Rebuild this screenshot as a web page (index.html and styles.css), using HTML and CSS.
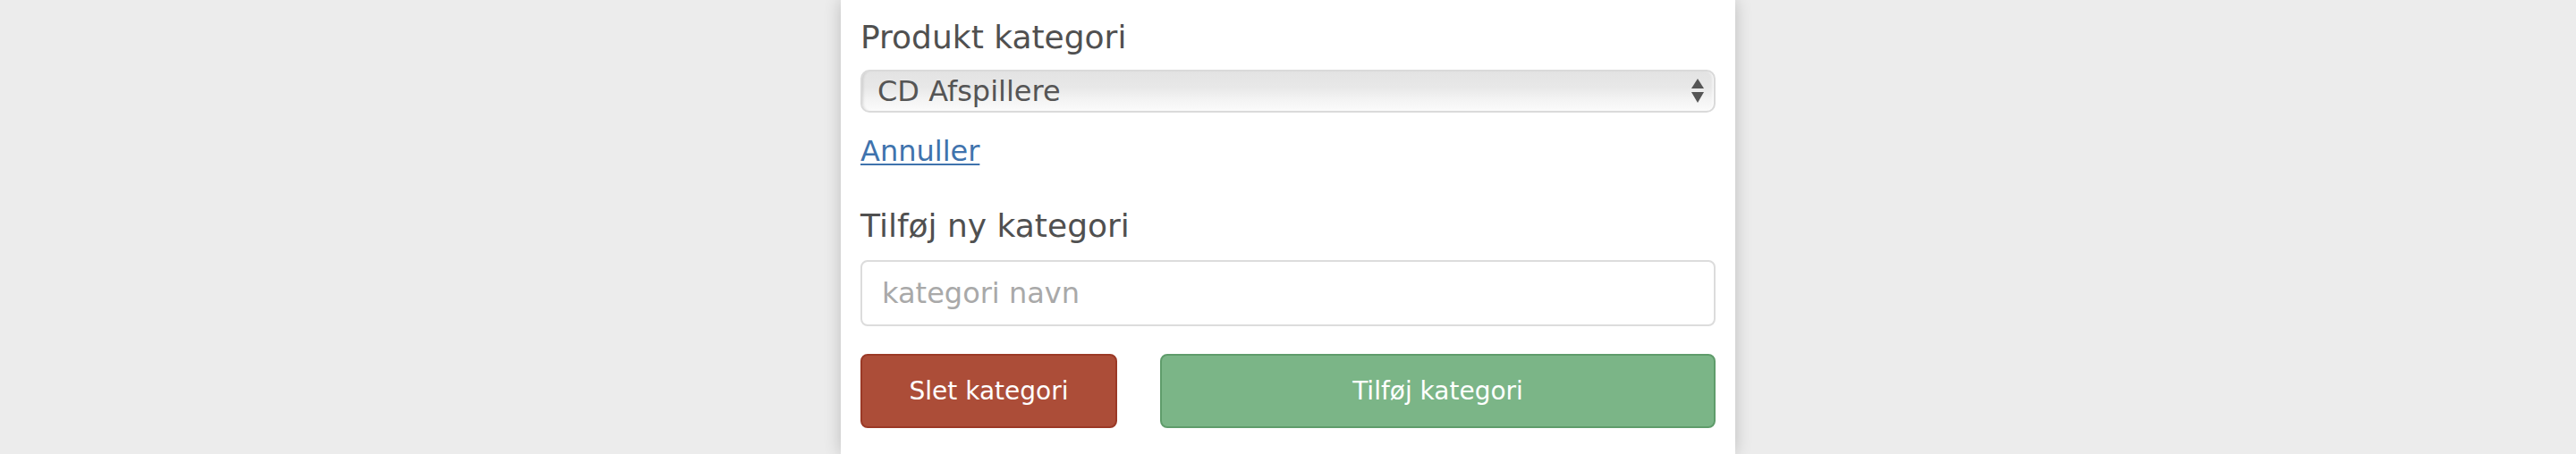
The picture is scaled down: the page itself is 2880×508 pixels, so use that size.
FILE: index.html
```html
<!DOCTYPE html>
<html lang="da">
<head>
<meta charset="utf-8">
<title>Produkt kategori</title>
<link rel="stylesheet" href="styles.css">
</head>
<body>
<main class="panel">
  <form class="category-form">
    <label class="field-label" for="cat">Produkt kategori</label>
    <div class="select-wrap">
      <select id="cat" class="select">
        <option>CD Afspillere</option>
      </select>
      <svg class="select-arrows" width="14" height="28" viewBox="0 0 14 28" aria-hidden="true">
        <polygon points="7,0 14,11 0,11" fill="#555"/>
        <polygon points="0,15 14,15 7,27" fill="#555"/>
      </svg>
    </div>
    <a class="cancel-link" href="#">Annuller</a>

    <label class="field-label second" for="newcat">Tilføj ny kategori</label>
    <input id="newcat" class="text-input" type="text" placeholder="kategori navn">

    <div class="button-row">
      <button type="button" class="btn btn-danger">Slet kategori</button>
      <button type="button" class="btn btn-success">Tilføj kategori</button>
    </div>
  </form>
</main>
</body>
</html>
```

FILE: styles.css
```css
html, body {
  margin: 0;
  padding: 0;
}

body {
  background: #ececec;
  height: 508px;
  overflow: hidden;
  font-family: "DejaVu Sans", Verdana, sans-serif;
  color: #555;
}

.panel {
  width: 1000px;
  min-height: 508px;
  margin: 0 auto;
  background: #fff;
  box-sizing: border-box;
  padding: 20px 22px 0;
  box-shadow: 0 0 18px rgba(0, 0, 0, 0.2);
}

.category-form {
  display: flex;
  flex-direction: column;
}

.field-label {
  display: block;
  font-size: 36px;
  line-height: 44px;
  color: #505050;
  margin-bottom: 14px;
}

.field-label.second {
  margin-top: 40px;
  margin-bottom: 16px;
}

.select-wrap {
  position: relative;
}

.select {
  display: block;
  width: 100%;
  height: 48px;
  box-sizing: border-box;
  appearance: none;
  -webkit-appearance: none;
  border: 2px solid #dadada;
  border-radius: 10px;
  background: linear-gradient(#e3e3e3 0%, #e8e8e8 40%, #f3f3f3 70%, #fbfbfb 100%);
  box-shadow: inset 3px 0 3px -2px rgba(0, 0, 0, 0.12), inset -3px 0 3px -2px rgba(255, 255, 255, 0.9);
  font-family: "DejaVu Sans", Verdana, sans-serif;
  font-size: 32px;
  color: #555;
  padding: 0 40px 0 17px;
  margin: 0;
}

.select-arrows {
  position: absolute;
  right: 13px;
  top: 10px;
  pointer-events: none;
}

.cancel-link {
  align-self: flex-start;
  margin-top: 21px;
  font-size: 32px;
  line-height: 44px;
  color: #3f73ad;
  text-decoration: underline;
  text-decoration-thickness: 2px;
  text-underline-offset: 3px;
}

.text-input {
  display: block;
  width: 100%;
  height: 74px;
  box-sizing: border-box;
  border: 2px solid #dcdcdc;
  border-radius: 8px;
  background: #fff;
  padding: 0 22px;
  margin: 0;
  font-family: "DejaVu Sans", Verdana, sans-serif;
  font-size: 32px;
  color: #555;
}

.text-input::placeholder {
  color: #a9a9a9;
}

.button-row {
  display: grid;
  grid-template-columns: 287px 1fr;
  gap: 48px;
  margin-top: 31px;
}

.btn {
  height: 83px;
  border: 2px solid;
  border-radius: 8px;
  font-family: "DejaVu Sans", Verdana, sans-serif;
  font-size: 28px;
  color: #fff;
  padding: 0;
  margin: 0;
  cursor: pointer;
}

.btn-danger {
  background: #ac4d38;
  border-color: #9b3926;
}

.btn-success {
  background: #7bb587;
  border-color: #5f9c6b;
}
```
